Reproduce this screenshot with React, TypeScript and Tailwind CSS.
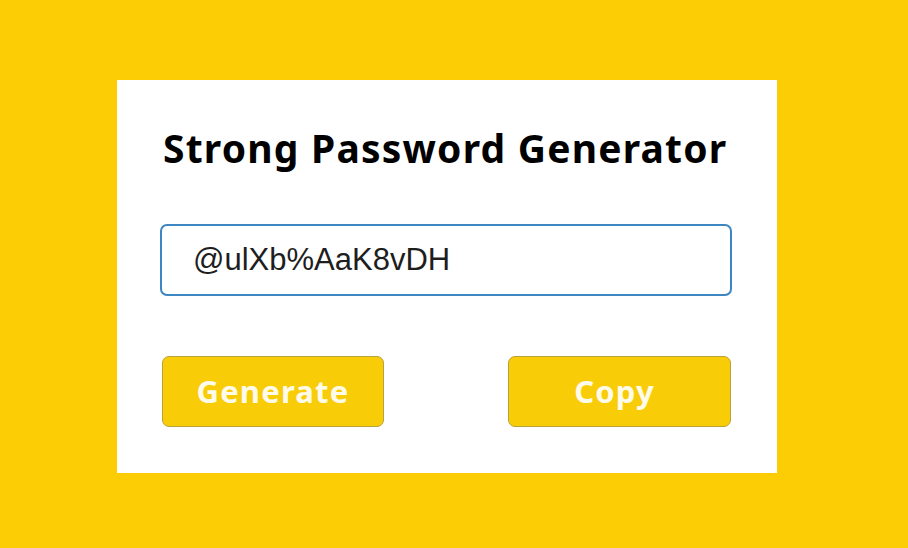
import React from "react";

export default function App() {
  return (
    <div className="w-[908px] h-[548px] bg-[#fccd04] pt-[80px] pl-[117px]">
      <div className="w-[660px] h-[393px] bg-white flex flex-col pt-[42px] px-[43px]">
        <h1
          className="text-[39px] leading-[52px] font-bold text-black pl-[3px] tracking-[1.2px] whitespace-nowrap"
          style={{ fontFamily: '"Noto Sans", "Open Sans", sans-serif' }}
        >
          Strong Password Generator
        </h1>
        <div className="mt-[50px] h-[72px] w-[572px] border-2 border-[#3d86c1] rounded-[7px] flex items-center pl-[31px]">
          <span
            className="text-[31px] text-[#1e1e1e]"
            style={{ fontFamily: '"Liberation Sans", Arial, sans-serif' }}
          >
            @ulXb%AaK8vDH
          </span>
        </div>
        <div className="mt-[60px] flex justify-between pl-[2px] pr-[3px]">
          <button
            className="w-[222px] h-[71px] bg-[#f9cc08] border border-[#b8a23a] rounded-[7px] text-[#fffbea] text-[31px] tracking-[1.2px] font-bold flex items-center justify-center"
            style={{ fontFamily: '"Noto Sans", "Open Sans", sans-serif' }}
          >
            Generate
          </button>
          <button
            className="w-[223px] h-[71px] bg-[#f9cc08] border border-[#b8a23a] rounded-[7px] text-[#fffbea] text-[31px] tracking-[1.2px] font-bold flex items-center justify-center pr-[10px]"
            style={{ fontFamily: '"Noto Sans", "Open Sans", sans-serif' }}
          >
            Copy
          </button>
        </div>
      </div>
    </div>
  );
}
